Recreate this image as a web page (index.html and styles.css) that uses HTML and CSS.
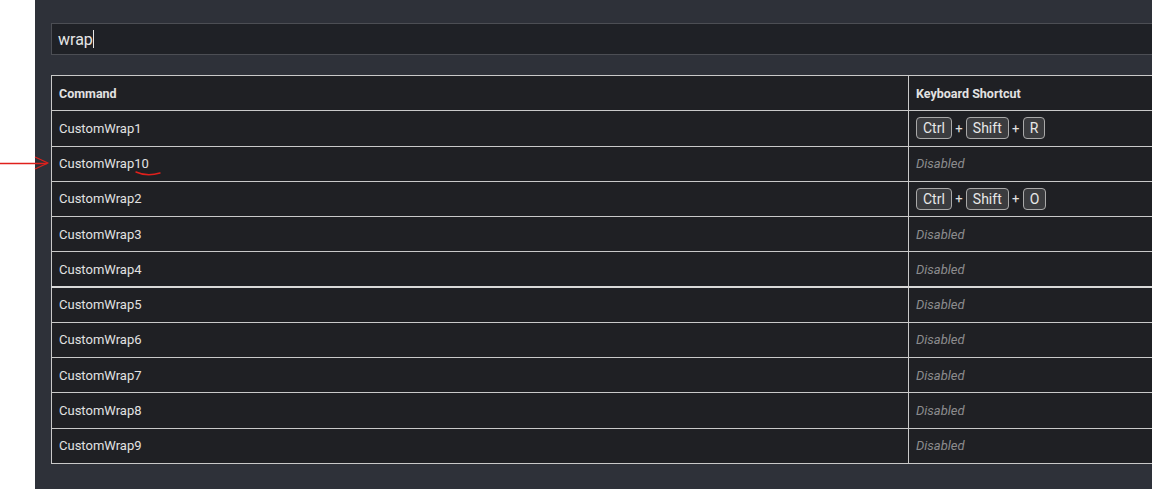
FILE: index.html
```html
<!DOCTYPE html>
<html>
<head>
<meta charset="utf-8">
<link rel="stylesheet" href="styles.css">
</head>
<body>
<div class="page">
  <div class="margin"></div>
  <div class="panel">
    <div class="search"><span class="query">wrap</span><span class="caret"></span></div>
    <table class="grid">
      <thead>
        <tr><th class="c1">Command</th><th>Keyboard Shortcut</th></tr>
      </thead>
      <tbody>
        <tr><td>CustomWrap1</td><td><span class="key">Ctrl</span><span class="plus">+</span><span class="key">Shift</span><span class="plus">+</span><span class="key">R</span></td></tr>
        <tr><td>CustomWrap10</td><td class="dis">Disabled</td></tr>
        <tr><td>CustomWrap2</td><td><span class="key">Ctrl</span><span class="plus">+</span><span class="key">Shift</span><span class="plus">+</span><span class="key">O</span></td></tr>
        <tr><td>CustomWrap3</td><td class="dis">Disabled</td></tr>
        <tr class="thick"><td>CustomWrap4</td><td class="dis">Disabled</td></tr>
        <tr><td>CustomWrap5</td><td class="dis">Disabled</td></tr>
        <tr><td>CustomWrap6</td><td class="dis">Disabled</td></tr>
        <tr><td>CustomWrap7</td><td class="dis">Disabled</td></tr>
        <tr><td>CustomWrap8</td><td class="dis">Disabled</td></tr>
        <tr><td>CustomWrap9</td><td class="dis">Disabled</td></tr>
      </tbody>
    </table>
  </div>
  <svg class="annot" width="180" height="190" viewBox="0 0 180 190">
    <path d="M0 163.5 H47" stroke="#e0201c" stroke-width="1.3" fill="none"/>
    <path d="M35 157 L48 163 L35 169" stroke="#e0201c" stroke-width="1.3" fill="none" stroke-linejoin="round"/>
    <path d="M136 172 Q147 177 160 173" stroke="#e0201c" stroke-width="1.4" fill="none" stroke-linecap="round"/>
  </svg>
</div>
</body>
</html>
```
FILE: styles.css
```css
html, body {
  margin: 0;
  padding: 0;
  background: #ffffff;
  overflow: hidden;
}
.page {
  position: relative;
  display: flex;
  width: 1152px;
  height: 489px;
  overflow: hidden;
  font-family: Roboto, "Liberation Sans", sans-serif;
}
.margin {
  flex: 0 0 35px;
  background: #ffffff;
}
.panel {
  flex: 0 0 1200px;
  background: #2e3139;
  padding: 23px 0 0 16px;
  box-sizing: border-box;
}
.search {
  width: 1200px;
  height: 32px;
  box-sizing: border-box;
  border: 1px solid #4c4e54;
  background: #1f2126;
  display: flex;
  align-items: center;
  padding-left: 6px;
  color: #e6e6e6;
  font-size: 16px;
}
.caret {
  display: inline-block;
  width: 1px;
  height: 18px;
  background: #e6e6e6;
}
.grid {
  margin-top: 20px;
  width: 1200px;
  border-collapse: collapse;
  background: #1f2024;
  color: #e2e2e2;
  font-size: 13px;
  border: 1px solid #c9c9c9;
}
.grid th, .grid td {
  border: 1px solid #c9c9c9;
  height: 35.27px;
  padding: 0 7px;
  text-align: left;
  vertical-align: middle;
  box-sizing: border-box;
}
.grid th {
  font-weight: bold;
  font-size: 12.5px;
}
.grid .c1 {
  width: 857px;
}
.grid tr.thick td {
  border-bottom: 2px solid #d8d8d8;
}
.dis {
  font-style: italic;
  color: #8c8c8e;
}
.key {
  display: inline-block;
  border: 1px solid #a9a9a9;
  border-radius: 4px;
  background: #3b3c3f;
  padding: 0 6px;
  height: 22px;
  line-height: 20px;
  box-sizing: border-box;
  font-size: 14px;
  color: #e8e8e8;
  vertical-align: middle;
}
.plus {
  display: inline-block;
  width: 14px;
  text-align: center;
  font-size: 13px;
  vertical-align: middle;
}
.annot {
  position: absolute;
  left: 0;
  top: 0;
}
```
